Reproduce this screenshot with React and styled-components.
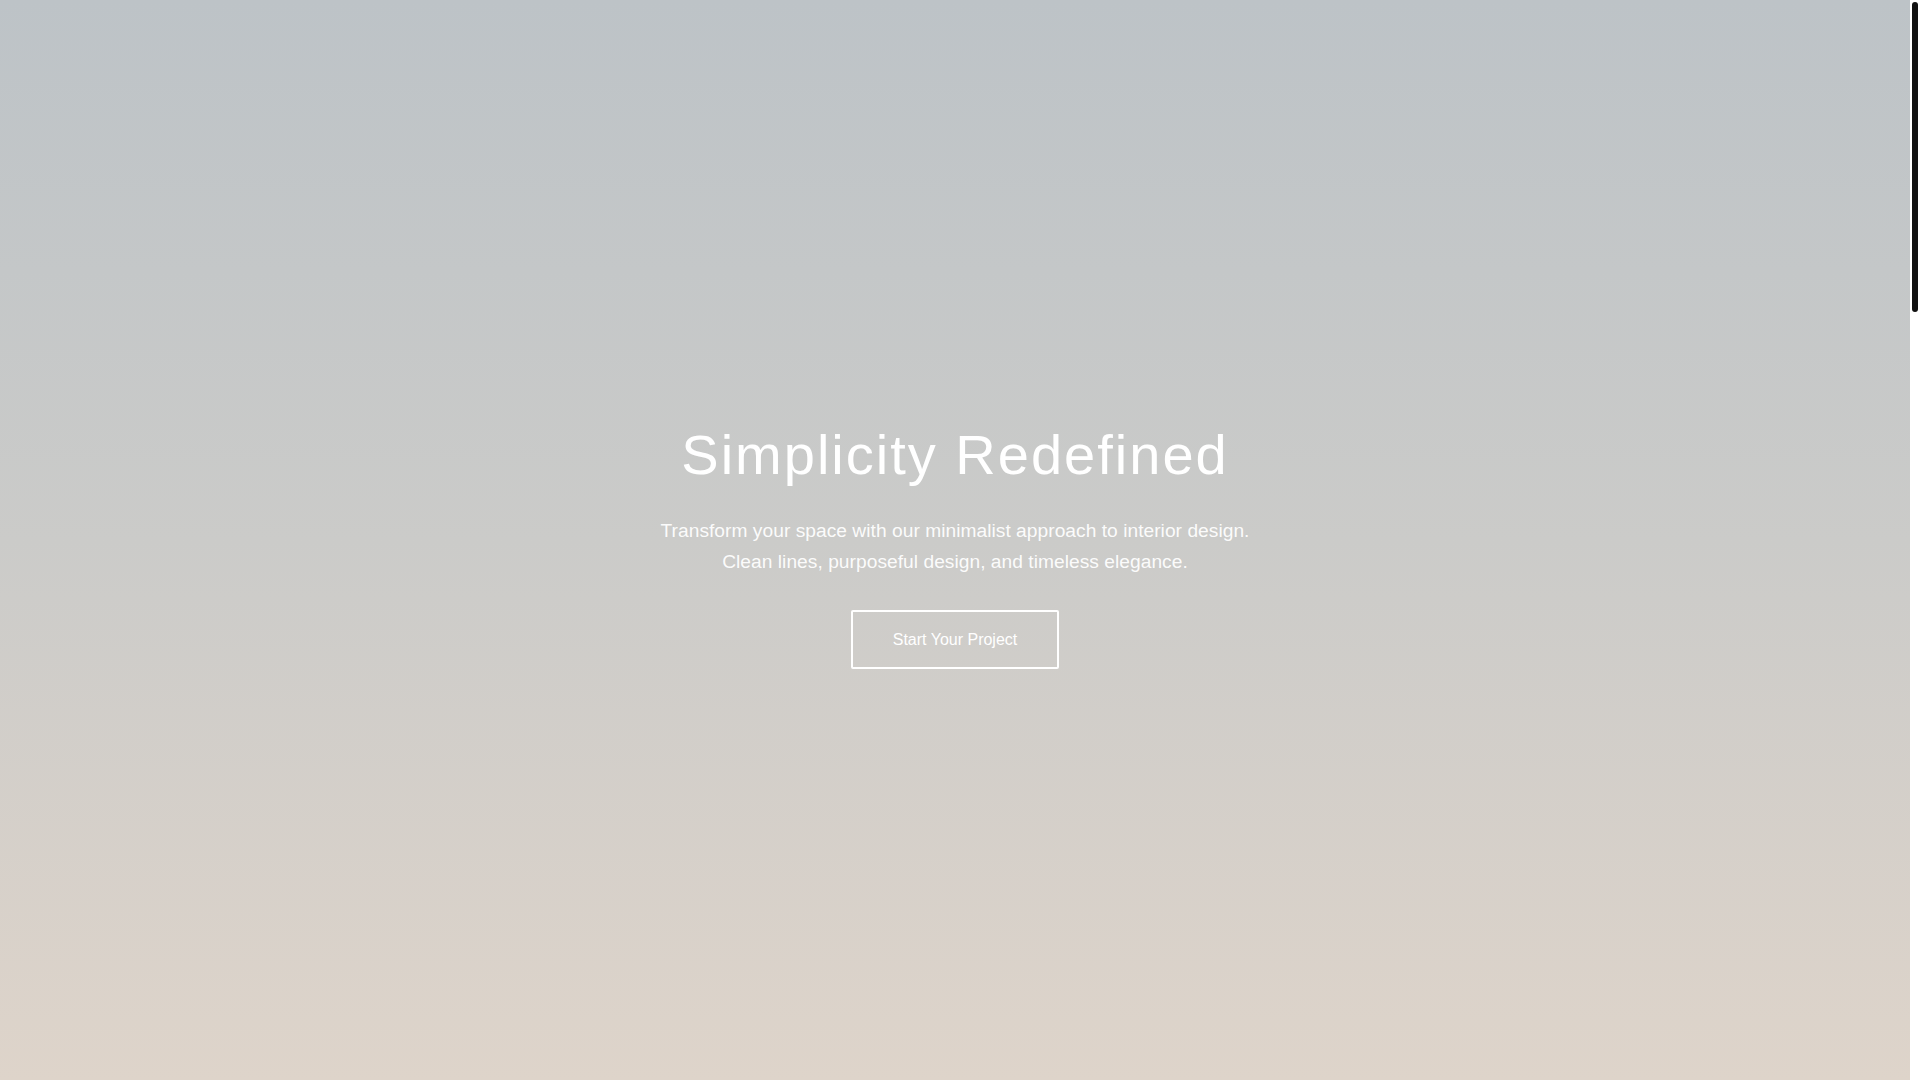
import React, { useRef, useState, useEffect } from 'react'
import styled, { createGlobalStyle } from 'styled-components'

const GlobalStyle = createGlobalStyle`
    *{
        margin:0;
        padding:0;
        box-sizing:border-box;
    }
    html,body{
        height:100%;
        overflow:hidden;
        font-family:"Liberation Sans", Arial, sans-serif;
        color:#333;
        background:#fff;
    }
`

const Shell = styled.div`
    display:flex;
    height:100vh;
`

const Scroller = styled.main`
    flex:1;
    height:100vh;
    overflow-y:auto;
    scrollbar-width:none;
    &::-webkit-scrollbar{
        display:none;
    }
`

const Rail = styled.div`
    width:10px;
    height:100vh;
    background:#fff;
    position:relative;
`

const Thumb = styled.div`
    position:absolute;
    left:2px;
    right:2px;
    background:#111;
    border-radius:3px;
`

const HeroSection = styled.section`
    height:100vh;
    display:flex;
    align-items:center;
    justify-content:center;
    padding-top:10px;
    background:linear-gradient(180deg,#bdc3c7 0%,#cbcbc9 50%,#ded4ca 100%);
`

const HeroContent = styled.div`
    display:flex;
    flex-direction:column;
    align-items:center;
    text-align:center;
    color:#fff;
`

const Title = styled.h1`
    font-size:56px;
    font-weight:300;
    line-height:1.2;
    letter-spacing:2px;
    margin-bottom:28px;
`

const Lead = styled.p`
    font-size:19.2px;
    line-height:1.6;
    max-width:600px;
    letter-spacing:0.03px;
    color:rgba(255,255,255,0.95);
    margin-bottom:33px;
`

const OutlineButton = styled.a`
    display:inline-block;
    padding:18px 40px;
    border:2px solid #fff;
    border-radius:2px;
    color:#fff;
    font-size:16px;
    line-height:19px;
    text-decoration:none;
    cursor:pointer;
    transition:0.3s;
    &:hover{
        background:#fff;
        color:#333;
    }
`

const Section = styled.section`
    height:${p => p.tall}px;
    background:${p => p.bg};
`

export default function App() {
    const scroller = useRef(null)
    const [thumb, setThumb] = useState({ top: 2, height: 310 })

    useEffect(() => {
        const el = scroller.current
        const update = () => {
            const track = el.clientHeight - 4
            const ratio = el.clientHeight / el.scrollHeight
            setThumb({
                top: 2 + (el.scrollTop / el.scrollHeight) * track,
                height: track * ratio
            })
        }
        update()
        el.addEventListener('scroll', update)
        window.addEventListener('resize', update)
        return () => {
            el.removeEventListener('scroll', update)
            window.removeEventListener('resize', update)
        }
    }, [])

    return (
        <Shell>
            <GlobalStyle />
            <Scroller ref={scroller}>
                <HeroSection>
                    <HeroContent>
                        <Title>Simplicity Redefined</Title>
                        <Lead>
                            Transform your space with our minimalist approach to interior design.
                            Clean lines, purposeful design, and timeless elegance.
                        </Lead>
                        <OutlineButton>Start Your Project</OutlineButton>
                    </HeroContent>
                </HeroSection>
                <Section tall={900} bg="#fff" />
                <Section tall={900} bg="#f7f5f2" />
                <Section tall={869} bg="#fff" />
            </Scroller>
            <Rail>
                <Thumb style={{ top: thumb.top, height: thumb.height }} />
            </Rail>
        </Shell>
    )
}
